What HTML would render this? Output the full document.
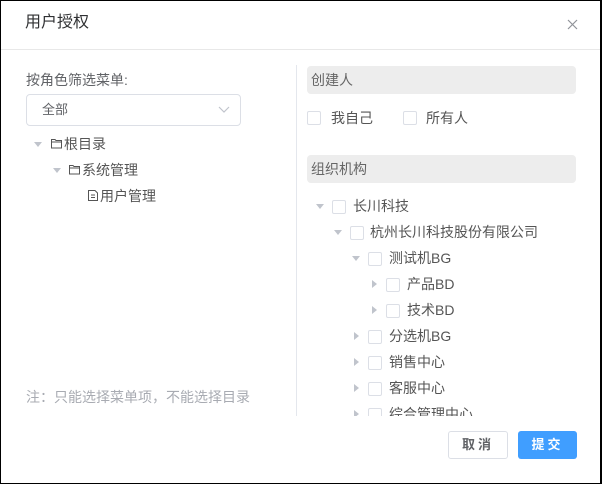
<!DOCTYPE html>
<html><head><meta charset="utf-8"><style>
*{margin:0;padding:0;box-sizing:border-box}
html,body{width:602px;height:484px;overflow:hidden;background:#fff}
body{font-family:"Liberation Sans","Noto Sans CJK SC",sans-serif;color:#333;font-size:14px;position:relative}
.frame{position:absolute;left:0;top:0;width:602px;height:484px;border:1px solid #000;border-right-width:2px}
.a{position:absolute;white-space:nowrap;line-height:20px}
.cb{position:absolute;width:14px;height:14px;border:1px solid #dcdfe6;border-radius:2px;background:#fff}
.cd{position:absolute;width:0;height:0;border-left:4px solid transparent;border-right:4px solid transparent;border-top:5px solid #c0c4cc}
.cr{position:absolute;width:0;height:0;border-top:4px solid transparent;border-bottom:4px solid transparent;border-left:5px solid #c0c4cc}
.bar{position:absolute;left:307px;width:269px;height:28px;background:#ededed;border-radius:4px;color:#666;font-size:14px;line-height:28px;padding-left:4px}
.t{color:#555}
</style></head><body>
<div class="frame"></div>
<div class="a" style="left:25px;top:13px;font-size:16px;color:#303133">用户授权</div>
<svg class="a" style="left:567px;top:19px" width="11" height="11" viewBox="0 0 11 11"><path d="M1 1L10 10M10 1L1 10" stroke="#909399" stroke-width="1.2"/></svg>
<div class="a" style="left:1px;top:49px;width:599px;height:1px;background:#e8e8e8"></div>
<div class="a" style="left:296px;top:65px;width:1px;height:351px;background:#e4e7ed"></div>

<div class="a t" style="left:26px;top:70px;color:#606266">按角色筛选菜单:</div>
<div class="a" style="left:26px;top:94px;width:215px;height:32px;border:1px solid #dcdfe6;border-radius:4px"></div>
<div class="a" style="left:42px;top:100px;color:#606266;font-size:13px">全部</div>
<svg class="a" style="left:218px;top:106px" width="12" height="8" viewBox="0 0 12 8"><path d="M1 1L6 6L11 1" fill="none" stroke="#c0c4cc" stroke-width="1.2"/></svg>

<div class="cd" style="left:34px;top:142px"></div>
<svg class="a" style="left:50px;top:137px" width="13" height="13" viewBox="0 0 13 13"><path d="M1.5 2.5H5L6 3.5H11.5V11H1.5Z M1.5 5H11.5" fill="none" stroke="#555" stroke-width="1"/></svg>
<div class="a t" style="left:64px;top:134px">根目录</div>
<div class="cd" style="left:53px;top:168px"></div>
<svg class="a" style="left:68px;top:163px" width="13" height="13" viewBox="0 0 13 13"><path d="M1.5 2.5H5L6 3.5H11.5V11H1.5Z M1.5 5H11.5" fill="none" stroke="#555" stroke-width="1"/></svg>
<div class="a t" style="left:82px;top:160px">系统管理</div>
<svg class="a" style="left:87px;top:189px" width="12" height="13" viewBox="0 0 12 13"><path d="M1.5 1.5H8L10.5 4V11.5H1.5Z M4 6H8M4 8.5H8" fill="none" stroke="#555" stroke-width="1"/></svg>
<div class="a t" style="left:100px;top:186px">用户管理</div>

<div class="a" style="left:26px;top:387px;color:#a8abb2">注：只能选择菜单项，不能选择目录</div>

<div class="bar" style="top:66px">创建人</div>
<div class="cb" style="left:307px;top:111px"></div>
<div class="a t" style="left:331px;top:108px">我自己</div>
<div class="cb" style="left:403px;top:111px"></div>
<div class="a t" style="left:426px;top:108px">所有人</div>
<div class="bar" style="top:155px">组织机构</div>

<div style="position:absolute;left:297px;top:190px;width:300px;height:226px;overflow:hidden">
<div class="cd" style="left:19px;top:14px"></div><div class="cb" style="left:35px;top:10px"></div><div class="a t" style="left:56px;top:6px">长川科技</div>
<div class="cd" style="left:37px;top:40px"></div><div class="cb" style="left:53px;top:36px"></div><div class="a t" style="left:73px;top:32px">杭州长川科技股份有限公司</div>
<div class="cd" style="left:55px;top:66px"></div><div class="cb" style="left:71px;top:62px"></div><div class="a t" style="left:92px;top:58px">测试机BG</div>
<div class="cr" style="left:75px;top:90px"></div><div class="cb" style="left:89px;top:88px"></div><div class="a t" style="left:110px;top:84px">产品BD</div>
<div class="cr" style="left:75px;top:116px"></div><div class="cb" style="left:89px;top:114px"></div><div class="a t" style="left:110px;top:110px">技术BD</div>
<div class="cr" style="left:57px;top:142px"></div><div class="cb" style="left:71px;top:140px"></div><div class="a t" style="left:92px;top:136px">分选机BG</div>
<div class="cr" style="left:57px;top:168px"></div><div class="cb" style="left:71px;top:166px"></div><div class="a t" style="left:92px;top:162px">销售中心</div>
<div class="cr" style="left:57px;top:194px"></div><div class="cb" style="left:71px;top:192px"></div><div class="a t" style="left:92px;top:188px">客服中心</div>
<div class="cr" style="left:57px;top:220px"></div><div class="cb" style="left:71px;top:218px"></div><div class="a t" style="left:92px;top:214px">综合管理中心</div>
</div>

<div class="a" style="left:448px;top:431px;width:60px;height:28px;border:1px solid #dcdfe6;border-radius:3px;text-align:center;line-height:26px;font-size:13px;color:#606266;font-weight:bold;letter-spacing:3px">取消</div>
<div class="a" style="left:518px;top:431px;width:59px;height:28px;background:#409eff;border-radius:3px;text-align:center;line-height:28px;font-size:13px;color:#fff;font-weight:bold;letter-spacing:3px">提交</div>
</body></html>
